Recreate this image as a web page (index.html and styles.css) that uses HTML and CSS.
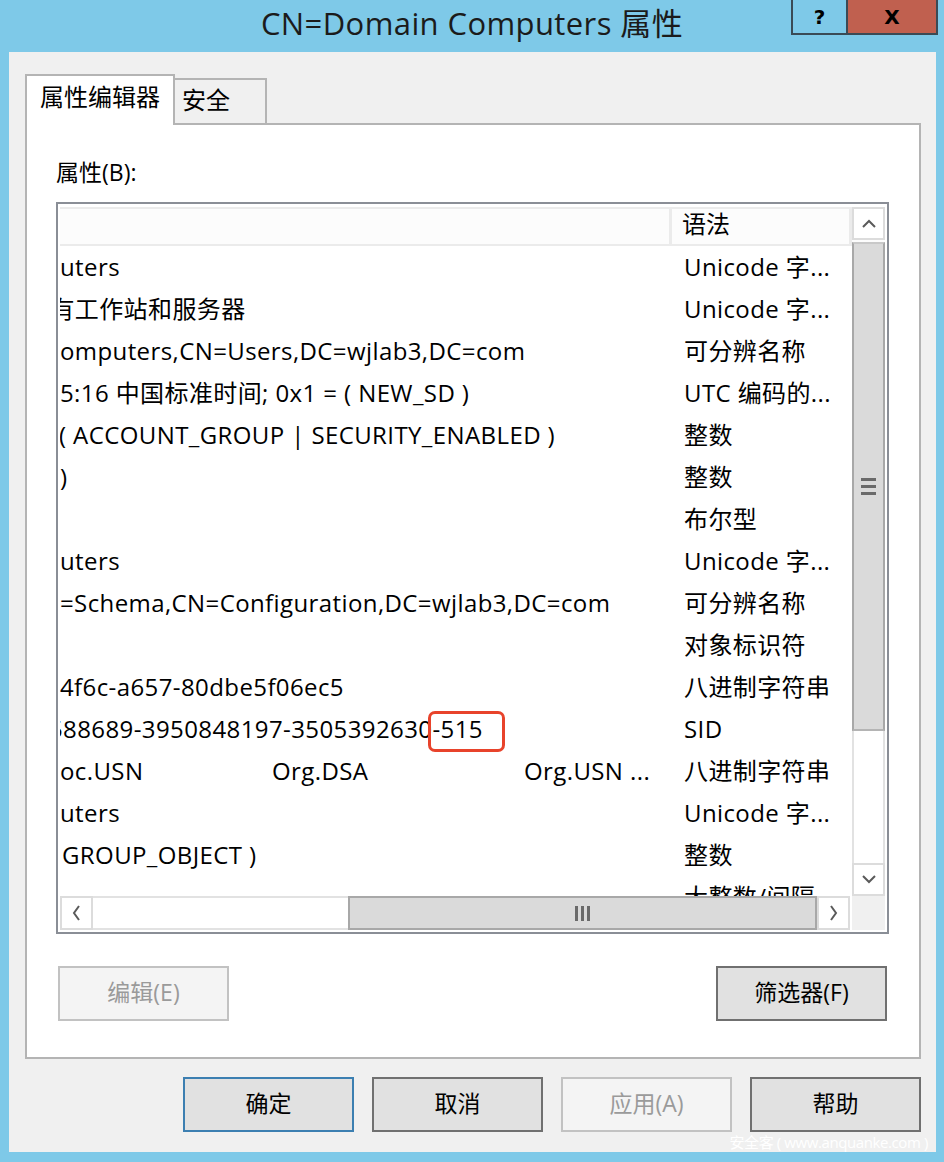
FILE: index.html
```html
<!DOCTYPE html>
<html lang="zh-CN">
<head>
<meta charset="utf-8">
<title>CN=Domain Computers 属性</title>
<link rel="stylesheet" href="styles.css">
</head>
<body>
<div class="window">
  <div class="titlebar">
    <div class="title">CN=Domain Computers 属性</div>
    <div class="caption-btns">
      <div class="cap help">?</div>
      <div class="cap close">X</div>
    </div>
  </div>
  <div class="client">
    <div class="tabs">
      <div class="tab active">属性编辑器</div>
      <div class="tab">安全</div>
    </div>
    <div class="panel">
      <div class="label">属性(B):</div>
      <div class="listbox">
        <div class="view">
          <div class="header">
            <div class="hcell c1"></div>
            <div class="hcell c2">语法</div>
          </div>
          <div class="rows">
            <div class="row"><div class="c1">uters</div><div class="c2">Unicode 字...</div></div>
            <div class="row"><div class="c1 cut1">所有工作站和服务器</div><div class="c2">Unicode 字...</div></div>
            <div class="row"><div class="c1">omputers,CN=Users,DC=wjlab3,DC=com</div><div class="c2">可分辨名称</div></div>
            <div class="row"><div class="c1">5:16 中国标准时间; 0x1 = ( NEW_SD )</div><div class="c2">UTC 编码的...</div></div>
            <div class="row"><div class="c1 cut2">( ACCOUNT_GROUP | SECURITY_ENABLED )</div><div class="c2">整数</div></div>
            <div class="row"><div class="c1">)</div><div class="c2">整数</div></div>
            <div class="row"><div class="c1"></div><div class="c2">布尔型</div></div>
            <div class="row"><div class="c1">uters</div><div class="c2">Unicode 字...</div></div>
            <div class="row"><div class="c1">=Schema,CN=Configuration,DC=wjlab3,DC=com</div><div class="c2">可分辨名称</div></div>
            <div class="row"><div class="c1"></div><div class="c2">对象标识符</div></div>
            <div class="row"><div class="c1">4f6c-a657-80dbe5f06ec5</div><div class="c2">八进制字符串</div></div>
            <div class="row"><div class="c1 cut3">588689-3950848197-3505392630<span class="mark">-515</span></div><div class="c2">SID</div></div>
            <div class="row"><div class="c1"><span class="m1">oc.USN</span><span class="m2">Org.DSA</span><span>Org.USN ...</span></div><div class="c2">八进制字符串</div></div>
            <div class="row"><div class="c1">uters</div><div class="c2">Unicode 字...</div></div>
            <div class="row"><div class="c1 pad">GROUP_OBJECT )</div><div class="c2">整数</div></div>
            <div class="row"><div class="c1"></div><div class="c2">大整数/间隔</div></div>
          </div>
        </div>
        <div class="vscroll">
          <div class="sbtn">
            <svg width="14" height="9" viewBox="0 0 14 9"><polyline points="1,8 7,2 13,8" fill="none" stroke="#5a5a5a" stroke-width="2"/></svg>
          </div>
          <div class="vthumb">
            <span class="hgrip"></span><span class="hgrip"></span><span class="hgrip"></span>
          </div>
          <div class="vtrack"></div>
          <div class="sbtn">
            <svg width="14" height="9" viewBox="0 0 14 9"><polyline points="1,1 7,7 13,1" fill="none" stroke="#5a5a5a" stroke-width="2"/></svg>
          </div>
        </div>
        <div class="hscroll">
          <div class="sbtn">
            <svg width="9" height="16" viewBox="0 0 9 16"><polyline points="7,1 2,8 7,15" fill="none" stroke="#5a5a5a" stroke-width="2"/></svg>
          </div>
          <div class="htrack"></div>
          <div class="hthumb">
            <span class="vgrip"></span><span class="vgrip"></span><span class="vgrip"></span>
          </div>
          <div class="sbtn">
            <svg width="9" height="16" viewBox="0 0 9 16"><polyline points="2,1 7,8 2,15" fill="none" stroke="#5a5a5a" stroke-width="2"/></svg>
          </div>
        </div>
        <div class="corner"></div>
      </div>
      <div class="panel-btns">
        <div class="btn disabled">编辑(E)</div>
        <div class="btn">筛选器(F)</div>
      </div>
    </div>
    <div class="dialog-btns">
      <div class="btn default">确定</div>
      <div class="btn">取消</div>
      <div class="btn disabled">应用(A)</div>
      <div class="btn">帮助</div>
    </div>
  </div>
  <div class="watermark">安全客 ( www.anquanke.com )</div>
</div>
</body>
</html>
```

FILE: styles.css
```css
html, body {
  margin: 0;
  padding: 0;
}
body {
  background: #7ec9e8;
  font-family: "Open Sans", "Noto Sans CJK SC", sans-serif;
  color: #000;
  width: 944px;
  height: 1162px;
  overflow: hidden;
}
.window {
  position: relative;
  width: 944px;
  height: 1162px;
}
.titlebar {
  height: 52px;
  display: grid;
  grid-template-columns: 1fr auto 1fr;
}
.title {
  grid-column: 2;
  font-size: 31px;
  line-height: 46px;
  color: #1b1b1b;
  letter-spacing: 0.4px;
}
.caption-btns {
  grid-column: 3;
  justify-self: end;
  display: flex;
  margin-right: 6px;
  height: 35px;
  border: 2px solid #3a4a55;
  border-top: none;
  box-sizing: border-box;
}
.cap {
  height: 33px;
  display: flex;
  align-items: center;
  justify-content: center;
  font-family: "DejaVu Sans", sans-serif;
  font-weight: bold;
  font-size: 20px;
  color: #000;
}
.help {
  width: 53px;
  background: #7ec9e8;
  border-right: 2px solid #3a4a55;
}
.close {
  width: 88px;
  background: #c0604f;
}
.client {
  margin: 0 8px 0 9px;
  height: 1100px;
  background: #f0f0f0;
  padding: 20px 15px 0 16px;
  box-sizing: border-box;
}
.tabs {
  display: flex;
  align-items: flex-end;
  height: 51px;
}
.tab {
  box-sizing: border-box;
  border: 2px solid #b4b4b4;
  border-bottom: none;
  font-size: 24px;
}
.tab.active {
  width: 150px;
  height: 51px;
  background: #fff;
  padding: 4px 0 0 13px;
  margin-bottom: -2px;
  position: relative;
  z-index: 1;
  line-height: 34px;
}
.tab:not(.active) {
  width: 92px;
  height: 45px;
  background: #f0f0f0;
  border-left: none;
  padding: 3px 0 0 7px;
  line-height: 34px;
}
.panel {
  width: 896px;
  height: 936px;
  box-sizing: border-box;
  border: 2px solid #b4b4b4;
  background: #fff;
  padding: 32px 0 0 29px;
  display: flex;
  flex-direction: column;
}
.label {
  font-size: 23px;
  line-height: 30px;
  height: 30px;
  margin-bottom: 15px;
}
.listbox {
  width: 833px;
  height: 732px;
  box-sizing: border-box;
  border: 2px solid #8a8e96;
  padding: 3px 2px 2px 2px;
  display: grid;
  grid-template-columns: 1fr 33px;
  grid-template-rows: 1fr 34px;
}
.view {
  overflow: hidden;
  background: #fff;
}
.header {
  display: flex;
  height: 39px;
}
.hcell {
  box-sizing: border-box;
  border: 2px solid #ebebeb;
  border-right-width: 3px;
  background: #fcfcfc;
  font-size: 24px;
  line-height: 30px;
}
.hcell.c1 {
  width: 612px;
  border-left: none;
}
.hcell.c2 {
  flex: 1;
  padding-left: 10px;
  border-left: none;
}
.row {
  display: flex;
  height: 42px;
  line-height: 42px;
  font-size: 24px;
  letter-spacing: 0.4px;
  white-space: nowrap;
}
.row .c1 {
  width: 612px;
  flex: none;
}
.row .c2 {
  flex: 1;
  padding-left: 12px;
  overflow: hidden;
}
.cut1 { text-indent: -34px; }
.cut2 { text-indent: -1px; }
.cut3 { text-indent: -11px; }
.pad { padding-left: 2px; box-sizing: border-box; }
.m1 { display: inline-block; width: 212px; }
.m2 { display: inline-block; width: 252px; }
.mark {
  position: relative;
  display: inline-block;
  height: 42px;
  text-indent: 0;
}
.mark::after {
  content: "";
  position: absolute;
  left: -4px;
  right: -22px;
  top: 3px;
  height: 41px;
  box-sizing: border-box;
  border: 3px solid #e8432b;
  border-radius: 7px;
}
.vscroll {
  display: flex;
  flex-direction: column;
  background: #fcfcfc;
}
.sbtn {
  box-sizing: border-box;
  border: 2px solid #dcdcdc;
  background: #fff;
  display: flex;
  align-items: center;
  justify-content: center;
  flex: none;
}
.vscroll .sbtn {
  height: 33px;
}
.vthumb {
  margin-top: 2px;
  height: 489px;
  box-sizing: border-box;
  background: #dadada;
  border: 2px solid #a8a8a8;
  border-top-color: #c8c8c8;
  border-bottom-color: #b4b4b4;
  display: flex;
  flex-direction: column;
  align-items: center;
  justify-content: center;
  gap: 4px;
}
.hgrip {
  width: 15px;
  height: 3px;
  background: #6a6a6a;
}
.vtrack {
  flex: 1;
  border-left: 2px solid #e2e2e2;
  border-right: 2px solid #e2e2e2;
  background: #fff;
}
.hscroll {
  display: flex;
  background: #fff;
}
.hscroll .sbtn {
  width: 33px;
}
.htrack {
  width: 255px;
  border-top: 2px solid #e2e2e2;
  border-bottom: 2px solid #e2e2e2;
}
.hthumb {
  width: 469px;
  box-sizing: border-box;
  background: #dadada;
  border: 2px solid #a8a8a8;
  display: flex;
  align-items: center;
  justify-content: center;
  gap: 3px;
}
.vgrip {
  width: 3px;
  height: 15px;
  background: #6a6a6a;
}
.corner {
  background: #f0f0f0;
}
.panel-btns {
  margin-top: 32px;
  width: 833px;
  padding-left: 2px;
  box-sizing: border-box;
  display: flex;
  justify-content: space-between;
}
.btn {
  width: 171px;
  height: 55px;
  box-sizing: border-box;
  border: 2px solid #707070;
  background: #e1e1e1;
  display: flex;
  align-items: center;
  justify-content: center;
  font-size: 23px;
  padding-bottom: 5px;
  color: #000;
}
.btn.disabled {
  border-color: #c2c2c2;
  background: #f4f4f4;
  color: #9a9a9a;
}
.btn.default {
  border-color: #3c7fb1;
}
.panel-btns .btn:last-child {
  margin-right: 2px;
}
.dialog-btns {
  margin-top: 18px;
  display: flex;
  justify-content: flex-end;
  gap: 18px;
}
.watermark {
  position: absolute;
  right: 16px;
  top: 1131px;
  color: #fff;
  font-size: 15px;
  line-height: 22px;
  letter-spacing: -0.4px;
}
```
